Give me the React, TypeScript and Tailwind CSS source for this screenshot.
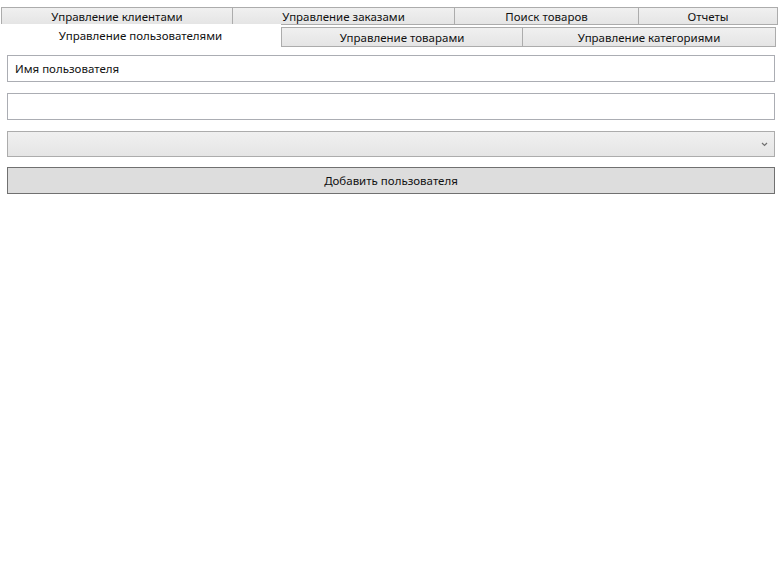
import React from 'react';

const row1 = [
  { label: 'Управление клиентами', w: 'w-[232px]' },
  { label: 'Управление заказами', w: 'w-[223px]' },
  { label: 'Поиск товаров', w: 'w-[185px]' },
  { label: 'Отчеты', w: 'flex-1' },
];

const row2 = [
  { label: 'Управление товарами', w: 'w-[242px]' },
  { label: 'Управление категориями', w: 'flex-1' },
];

const App: React.FC = () => {
  return (
    <div className="w-[778px] h-[562px] bg-white text-[11.5px] text-[#111] font-['Noto_Sans','Open_Sans',sans-serif] overflow-hidden">
      {/* Tab header rows */}
      <div className="pt-[7px]">
        <div className="flex h-[18px] pl-[1px]">
          {row1.map((t) => (
            <div
              key={t.label}
              className={`${t.w} -ml-[1px] first:ml-0 border border-[#acacac] bg-gradient-to-b from-[#f0f0f0] to-[#e5e5e5] flex items-center justify-center leading-none pt-[2px]`}
            >
              {t.label}
            </div>
          ))}
        </div>
        <div className="flex h-[23px] -mt-[1px]">
          <div className="w-[281px] bg-white flex items-center justify-center leading-none">
            Управление пользователями
          </div>
          <div className="flex-1 flex flex-col pt-[3px]">
            <div className="flex h-[20px] pr-[2px]">
              {row2.map((t) => (
                <div
                  key={t.label}
                  className={`${t.w} -ml-[1px] first:ml-0 border border-[#acacac] bg-gradient-to-b from-[#f0f0f0] to-[#e5e5e5] flex items-center justify-center leading-none pt-[2px]`}
                >
                  {t.label}
                </div>
              ))}
            </div>
          </div>
        </div>
      </div>

      {/* Form */}
      <div className="px-[7px] pr-[3px] pt-[8px] flex flex-col gap-[11px]">
        <div className="h-[27px] border border-[#abadb3] bg-white flex items-center pl-[7px]">
          Имя пользователя
        </div>
        <div className="h-[27px] border border-[#abadb3] bg-white" />
        <div className="h-[26px] border border-[#acacac] bg-gradient-to-b from-[#f0f0f0] to-[#e5e5e5] flex items-center justify-end pr-[6px]">
          <svg width="7" height="5" viewBox="0 0 7 5" className="text-[#707070]">
            <path d="M1 1 L3.5 3.5 L6 1" fill="none" stroke="currentColor" strokeWidth="1.2" />
          </svg>
        </div>
        <div className="h-[27px] -mt-[1px] border border-[#707070] bg-[#dddddd] flex items-center justify-center pt-[1px]">
          Добавить пользователя
        </div>
      </div>
    </div>
  );
};

export default App;
